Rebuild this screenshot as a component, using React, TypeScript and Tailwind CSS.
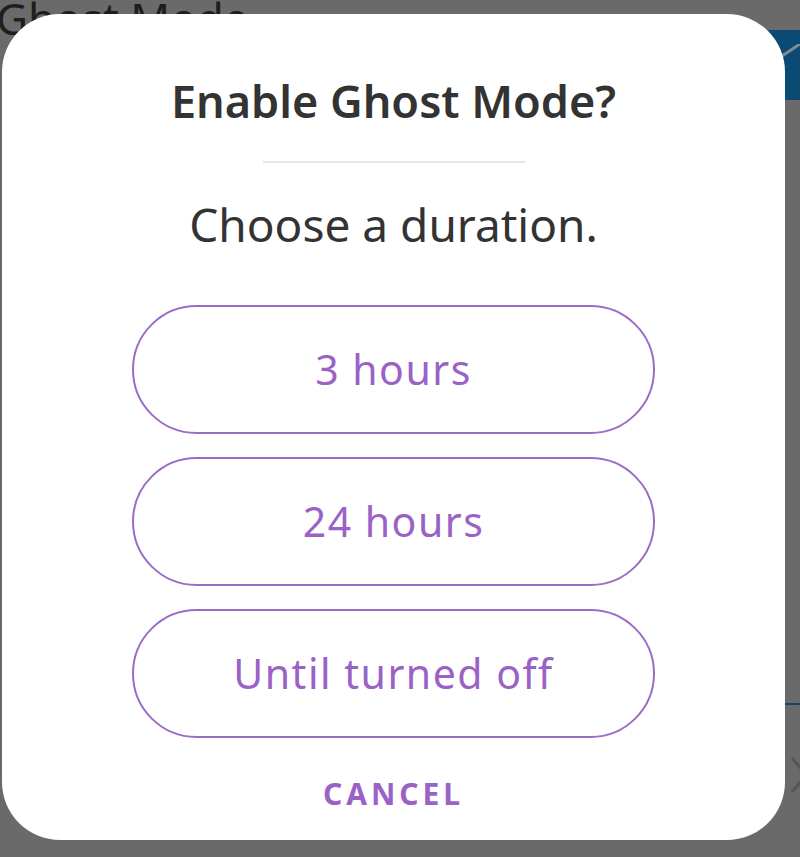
import React from "react";

const options = ["3 hours", "24 hours", "Until turned off"];

const App = () => {
  return (
    <div
      className="relative w-[800px] h-[857px] overflow-hidden bg-[#6a6a6a]"
      style={{ fontFamily: "'Noto Sans', 'Open Sans', sans-serif" }}
    >
      {/* dimmed page behind the dialog */}
      <div className="absolute left-[-4px] top-[-4px] text-[44px] text-[#1e1e1e] leading-none">
        Ghost Mode
      </div>
      <div className="absolute right-0 top-[30px] w-[40px] h-[70px] bg-[#0b4a72]">
        <svg className="absolute left-[12px] top-[14px]" width="30" height="30" viewBox="0 0 30 30">
          <path d="M4 16 L28 0" stroke="#7f8a92" strokeWidth="3" fill="none" />
        </svg>
      </div>
      <div className="absolute right-0 top-[703px] w-[20px] h-[2px] bg-[#0b4a72]" />
      <svg className="absolute right-[-6px] top-[756px]" width="16" height="38" viewBox="0 0 16 38">
        <path d="M2 2 L14 16 M14 22 L2 36" stroke="#555" strokeWidth="3" fill="none" />
      </svg>

      {/* dialog */}
      <div className="absolute left-[2px] top-[14px] w-[783px] h-[826px] bg-white rounded-[58px] flex flex-col items-center">
        <h1 className="mt-[60px] text-[45px] font-semibold text-[#333333] leading-[54px]">
          Enable Ghost Mode?
        </h1>
        <div className="mt-[33px] w-[262px] h-[2px] bg-[#e6e6e6]" />
        <p className="mt-[35px] text-[46px] text-[#333333] leading-[52px]">
          Choose a duration.
        </p>
        <div className="mt-[55px] flex flex-col gap-[23px]">
          {options.map((o) => (
            <button
              key={o}
              className="w-[523px] h-[129px] rounded-full border-2 border-[#9b6cc6] text-[41px] tracking-[1.5px] text-[#9a62c6] flex items-center justify-center"
            >
              {o}
            </button>
          ))}
        </div>
        <button className="mt-[36px] text-[30px] font-bold tracking-[4px] text-[#9a62c6] leading-[40px]">
          CANCEL
        </button>
      </div>
    </div>
  );
};

export default App;
